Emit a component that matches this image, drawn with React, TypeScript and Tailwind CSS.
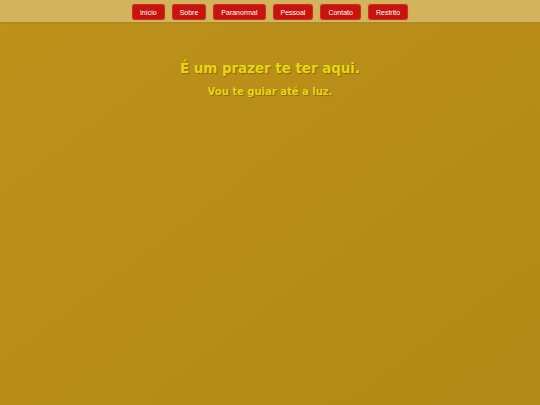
import React from "react";

const items = ["Início", "Sobre", "Paranormal", "Pessoal", "Contato", "Restrito"];

export default function App() {
  return (
    <div className="w-[540px] h-[405px] overflow-hidden flex flex-col bg-gradient-to-br from-[#bd921b] to-[#b28916]">
      <div className="h-[24px] bg-[#d3b35c] border-b-2 border-[#b08b20] flex justify-center items-start pt-[4px] gap-[7px]">
        {items.map((t) => (
          <div
            key={t}
            className="h-[16px] px-[7px] flex items-center rounded-[3px] bg-[#c8140d] border border-[#d0302a] text-white text-[7px] leading-none shadow-[0_0_1px_rgba(0,0,0,0.3)]"
            style={{ fontFamily: '"Liberation Sans", Arial, sans-serif' }}
          >
            {t}
          </div>
        ))}
      </div>
      <div
        className="flex flex-col items-center pt-[36px] text-[#e6d60f] font-bold"
        style={{ fontFamily: '"DejaVu Sans", Verdana, sans-serif' }}
      >
        <div className="text-[13.4px] leading-[18px] [text-shadow:1px_1px_1px_rgba(120,80,0,0.6)]">
          É um prazer te ter aqui.
        </div>
        <div className="mt-[7px] text-[10px] leading-[13px] [text-shadow:1px_1px_1px_rgba(120,80,0,0.6)]">
          Vou te guiar até a luz.
        </div>
      </div>
    </div>
  );
}
